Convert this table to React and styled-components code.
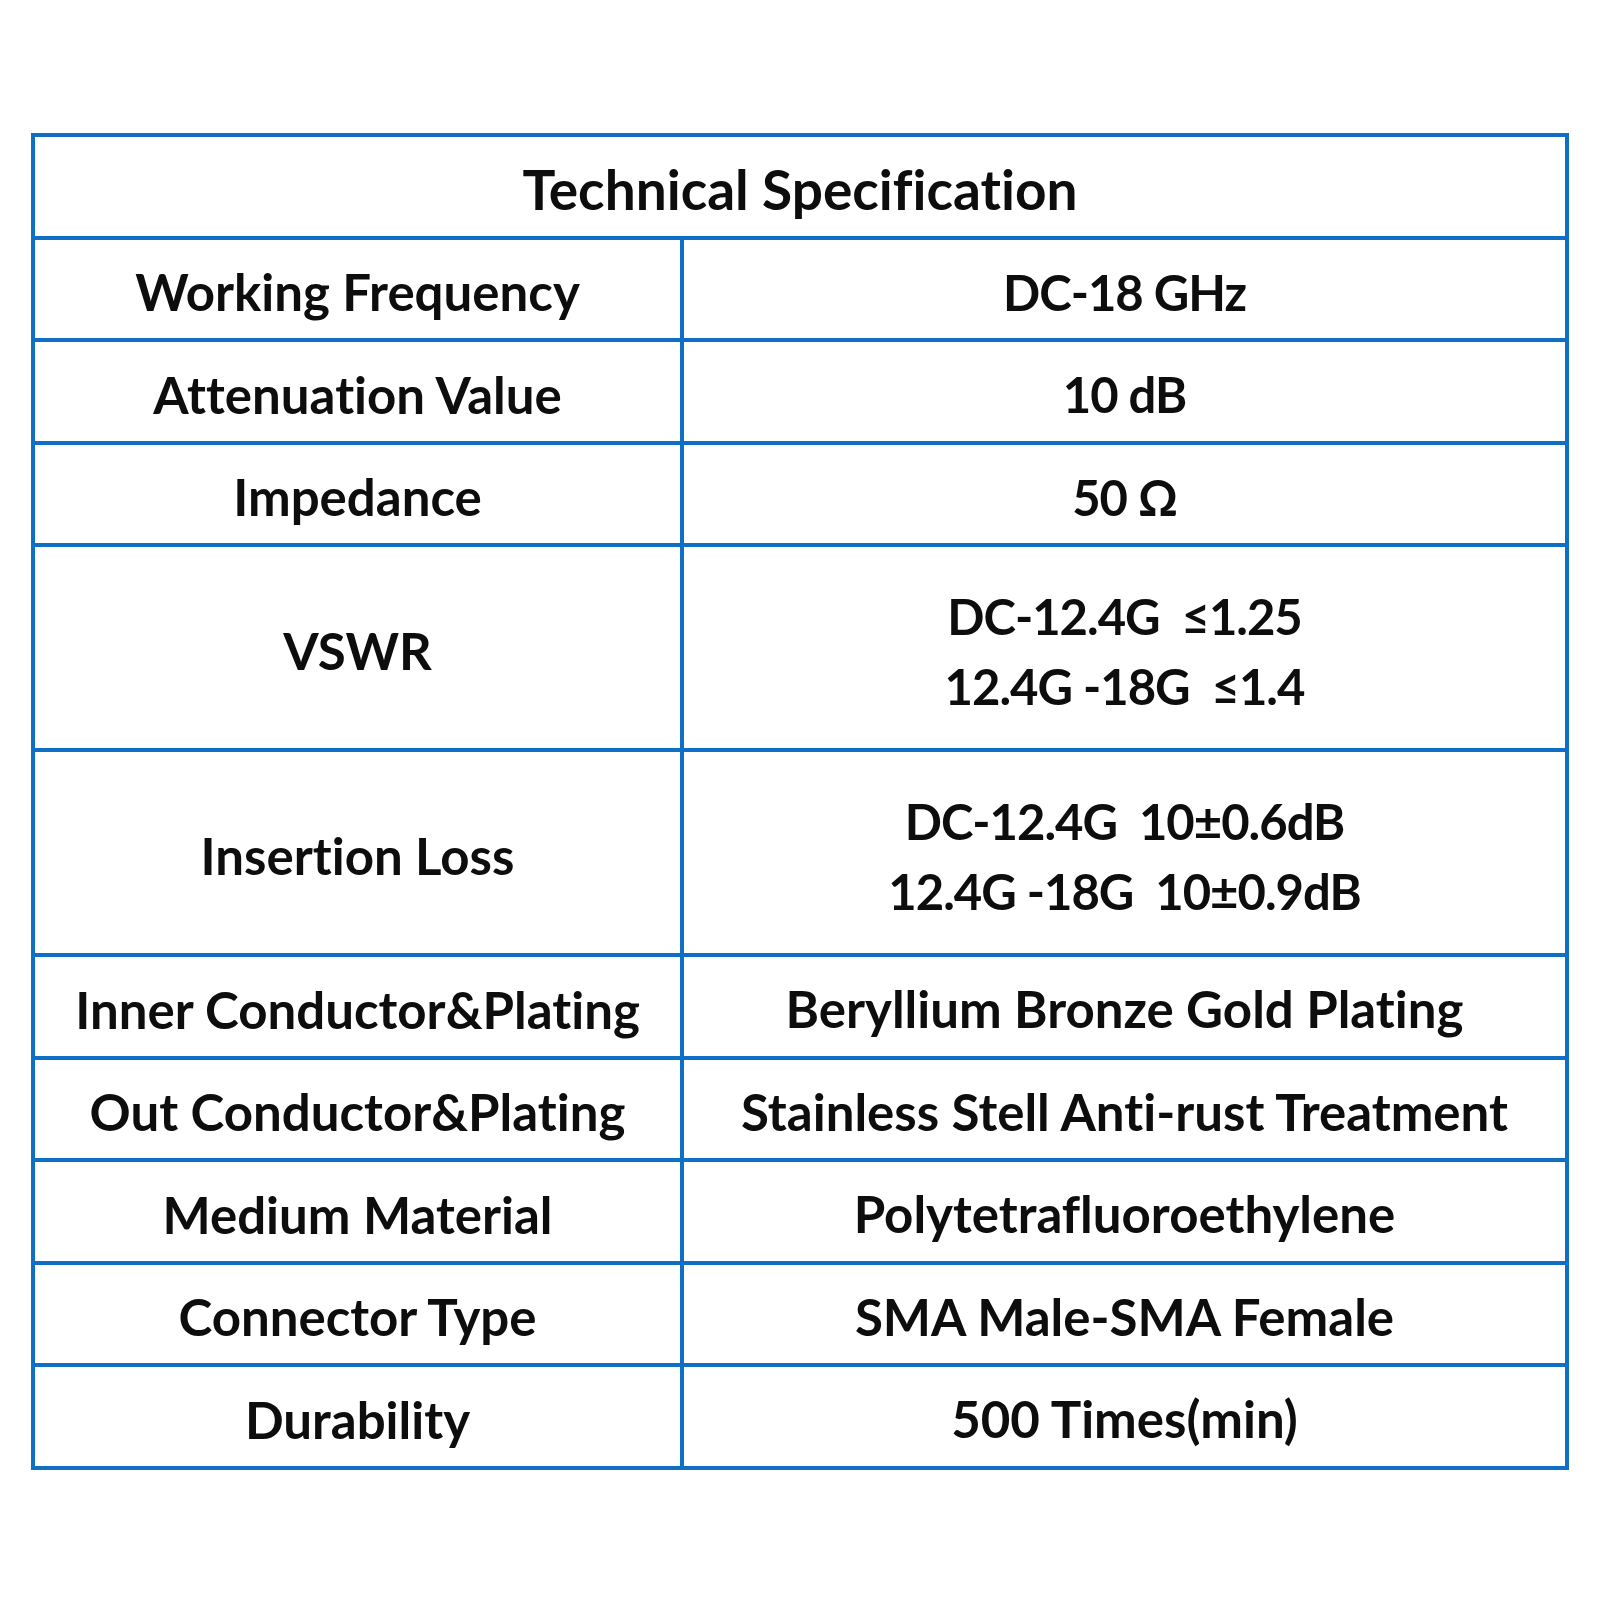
import React from 'react'
import styled, { createGlobalStyle } from 'styled-components'

// compact: digit-heavy values, Lato figures run wider than the original face
const rows = [
  { label: 'Working Frequency', value: ['DC-18 GHz'], compact: true },
  { label: 'Attenuation Value', value: ['10 dB'], compact: true },
  { label: 'Impedance', value: ['50 Ω'], compact: true },
  { label: 'VSWR', value: ['DC-12.4G  ≤1.25', '12.4G -18G  ≤1.4'], compact: true },
  { label: 'Insertion Loss', value: ['DC-12.4G  10±0.6dB', '12.4G -18G  10±0.9dB'], compact: true },
  { label: 'Inner Conductor&Plating', value: ['Beryllium Bronze Gold Plating'] },
  { label: 'Out Conductor&Plating', value: ['Stainless Stell Anti-rust Treatment'] },
  { label: 'Medium Material', value: ['Polytetrafluoroethylene'] },
  { label: 'Connector Type', value: ['SMA Male-SMA Female'] },
  { label: 'Durability', value: ['500 Times(min)'] }
]

const App = () => (
  <Page>
    <GlobalStyle />
    <SpecTable>
      <HeaderCell>Technical Specification</HeaderCell>
      {rows.map((row) => (
        <React.Fragment key={row.label}>
          <Cell tall={row.value.length > 1}>{row.label}</Cell>
          <Cell tall={row.value.length > 1}>
            {row.value.map((line) => (
              <Line key={line} compact={row.compact}>
                {line}
              </Line>
            ))}
          </Cell>
        </React.Fragment>
      ))}
    </SpecTable>
  </Page>
)

const GlobalStyle = createGlobalStyle`
  body {
    margin: 0;
    background: #ffffff;
    font-family: Lato, "Liberation Sans", sans-serif;
  }
`

const Page = styled.div`
  width: 1601px;
  height: 1601px;
  padding: 133px 0 0 31px;
  box-sizing: border-box;
`

const SpecTable = styled.div`
  display: grid;
  grid-template-columns: 645px 881px;
  gap: 4px;
  padding: 4px;
  width: fit-content;
  background: #0f6fc4;
`

const Cell = styled.div`
  height: ${(p) => (p.tall ? '201px' : '98.5px')};
  box-sizing: border-box;
  padding-top: 6px;
  background: #ffffff;
  display: flex;
  flex-direction: column;
  align-items: center;
  justify-content: center;
  font-size: 51px;
  font-weight: 700;
  font-variant-ligatures: none;
  color: #0d0d0d;
  white-space: pre;
`

const HeaderCell = styled(Cell)`
  grid-column: 1 / span 2;
  font-size: 55px;
`

const Line = styled.div`
  line-height: 70px;
  font-size: ${(p) => (p.compact ? '49px' : 'inherit')};
  letter-spacing: ${(p) => (p.compact ? '-1px' : 'normal')};
`

export default App
